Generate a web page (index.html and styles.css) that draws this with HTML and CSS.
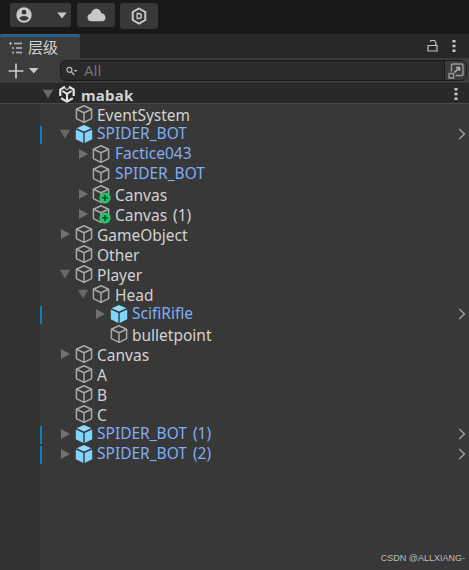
FILE: index.html
```
<!DOCTYPE html>
<html lang="zh-CN">

<head>
  <meta charset="UTF-8" />
  <meta name="viewport" content="width=device-width, initial-scale=1" />
  <title>层级</title>
  <link rel="stylesheet" href="styles.css">
</head>

<body>

  <!-- shared icons -->
  <svg class="sprite" width="0" height="0">
    <symbol id="cube" viewBox="0 0 18 20">
      <path d="M9 1.8 L16.6 5.2 V14.6 L9 18.4 L1.4 14.6 V5.2 Z M1.4 5.2 L9 8.8 L16.6 5.2 M9 8.8 V18.4" fill="none" stroke="#a8a8a8" stroke-width="1.5" stroke-linejoin="round" />
    </symbol>
    <symbol id="prefab" viewBox="0 0 18 20">
      <path d="M9 1 L16.4 4.3 L9 7.6 L1.6 4.3 Z" fill="#8bdcff" />
      <path d="M.8 5.6 L8.3 9 V19 L.8 15.2 Z M17.2 5.6 L9.7 9 V19 L17.2 15.2 Z" fill="#7fd6fd" />
    </symbol>
    <symbol id="down" viewBox="0 0 12 10">
      <path d="M.8 .8 H11.2 L6 9.5 Z" fill="#686868" />
    </symbol>
    <symbol id="right" viewBox="0 0 12 12">
      <path d="M2 1 L11 6 L2 11 Z" fill="#707070" />
    </symbol>
    <symbol id="plus" viewBox="0 0 12 12">
      <circle cx="6" cy="6" r="5.6" fill="#1cc765" />
      <path d="M6 3 V9 M3 6 H9" stroke="#17482c" stroke-width="1.7" />
    </symbol>
    <symbol id="dots" viewBox="0 0 4 14">
      <path d="M.5 1 H3.5 V3.5 H.5 Z M.5 5.7 H3.5 V8.3 H.5 Z M.5 10.5 H3.5 V13 H.5 Z" fill="#c8c8c8" />
    </symbol>
    <symbol id="open" viewBox="0 0 8 12">
      <path d="M1.3 1 L6.3 6 L1.3 11" fill="none" stroke="#989898" stroke-width="1.7" />
    </symbol>
  </svg>

  <div class="topbar">
    <div class="btn btn-account">
      <svg width="16" height="16" viewBox="0 0 16 16">
        <circle cx="8" cy="8" r="7.7" fill="#c8c8c8" />
        <circle cx="8" cy="5.2" r="2.4" fill="#383838" />
        <path d="M3.2 11.2 Q4.5 8.9 8 8.9 T12.8 11.2 Q11 13.7 8 13.7 T3.2 11.2 Z" fill="#383838" />
      </svg>
      <svg width="10" height="7" viewBox="0 0 10 7"><path d="M.3 .5 H9.7 L5 6.5 Z" fill="#c8c8c8" /></svg>
    </div>
    <div class="btn btn-cloud">
      <svg width="19" height="14" viewBox="0 0 19 14">
        <path d="M4.2 13.3 C-.6 13.3 -.8 6.3 4 5.6 C5.2 -.8 13.2 -1 14.3 5.3 C20 5.6 19.5 13.3 15 13.3 Z" fill="#c8c8c8" />
      </svg>
    </div>
    <div class="btn btn-hex">
      <svg width="16" height="18" viewBox="0 0 16 18">
        <path d="M8 1.5 L14.3 5 V13 L8 16.5 L1.7 13 V5 Z" fill="none" stroke="#c8c8c8" stroke-width="2" />
        <path d="M6.2 6.5 H8 Q10.3 6.5 10.3 9 T8 11.5 H6.2 Z" fill="none" stroke="#c8c8c8" stroke-width="1.4" />
      </svg>
    </div>
  </div>

  <div class="tabs">
    <div class="tab">
      <svg width="14" height="12" viewBox="0 0 14 12">
        <path d="M.3 1.5 H2.7 M5 1.5 H13 M3 6 H5 M7 6 H13 M3 10.5 H5 M7 10.5 H13" stroke="#bdbdbd" stroke-width="1.3" />
        <path d="M1.5 0 V3" stroke="#bdbdbd" />
      </svg>
      <span class="tab-name">层级</span>
    </div>
    <svg class="lock" width="11" height="13" viewBox="0 0 11 13">
      <path d="M1 6.5 H10 V12 H1 Z M8.8 6.5 V3.2 L7.5 1.5 H4 L3 2.6" fill="none" stroke="#c4c4c4" stroke-width="1.2" />
    </svg>
    <svg class="tab-menu" width="4" height="14"><use href="#dots" /></svg>
  </div>

  <div class="tools">
    <svg class="add" width="31" height="16" viewBox="0 0 31 16">
      <path d="M8 .5 V15.5 M.5 8 H15.5" stroke="#c8c8c8" stroke-width="1.7" />
      <path d="M21 5 H30.5 L25.7 10.5 Z" fill="#c8c8c8" />
    </svg>
    <div class="search">
      <svg width="12" height="10" viewBox="0 0 12 10">
        <circle cx="3.4" cy="3.8" r="2.5" fill="none" stroke="#b8b8b8" stroke-width="1.2" />
        <path d="M5.2 5.6 L8.3 8.9" stroke="#b8b8b8" stroke-width="1.4" />
        <path d="M7.7 4 H11.5 L9.6 6 Z" fill="#b8b8b8" />
      </svg>
      <span class="hint">All</span>
      <div class="picker">
        <svg width="16" height="16" viewBox="0 0 16 16">
          <path d="M3.5 8.5 V2 Q3.5 1 4.5 1 H14 Q15 1 15 2 V11.5 Q15 12.5 14 12.5 H7.5" fill="none" stroke="#999" stroke-width="1.4" />
          <path d="M1 10.5 H5.5 V15 H1 Z" fill="none" stroke="#999" stroke-width="1.4" />
          <path d="M6.5 9.5 L11.5 4.5 M8 4.5 H11.5 V8" fill="none" stroke="#b5b5b5" stroke-width="1.5" />
        </svg>
      </div>
    </div>
  </div>

  <div class="scene">
    <svg class="fold" width="12" height="10"><use href="#down" /></svg>
    <svg class="unity" width="16" height="18" viewBox="0 0 16 18">
      <path d="M6 1.6 L1.3 4.6 V11 M10 1.6 L14.7 4.6 V11 M2.2 13.3 L8 16.6 L13.8 13.3" fill="none" stroke="#e6e6e6" stroke-width="2.2" />
      <path d="M3.5 6 L8 8.8 L12.5 6 M8 8.8 V15.5" fill="none" stroke="#e6e6e6" stroke-width="2" />
      <path d="M5.3 3 L8 4.8 L10.7 3" fill="none" stroke="#bbb" stroke-width="1.1" />
    </svg>
    <span class="scene-name">mabak</span>
    <svg class="scene-menu" width="4" height="14"><use href="#dots" /></svg>
  </div>

  <div class="tree">
    <div class="row">
      <span class="arrow"></span>
      <svg class="icon"><use href="#cube" /></svg>
      <span class="name">EventSystem</span>
    </div>
    <div class="row linked">
      <span class="arrow"><svg width="12" height="10"><use href="#down" /></svg></span>
      <svg class="icon"><use href="#prefab" /></svg>
      <span class="name">SPIDER_BOT</span>
      <svg class="open"><use href="#open" /></svg>
    </div>
    <div class="row level-2 blue">
      <span class="arrow"><svg width="12" height="12"><use href="#right" /></svg></span>
      <svg class="icon"><use href="#cube" /></svg>
      <span class="name">Factice043</span>
    </div>
    <div class="row level-2 blue">
      <span class="arrow"></span>
      <svg class="icon"><use href="#cube" /></svg>
      <span class="name">SPIDER_BOT</span>
    </div>
    <div class="row level-2">
      <span class="arrow"><svg width="12" height="12"><use href="#right" /></svg></span>
      <span class="icon"><svg class="icon"><use href="#cube" /></svg><svg class="badge"><use href="#plus" /></svg></span>
      <span class="name">Canvas</span>
    </div>
    <div class="row level-2">
      <span class="arrow"><svg width="12" height="12"><use href="#right" /></svg></span>
      <span class="icon"><svg class="icon"><use href="#cube" /></svg><svg class="badge"><use href="#plus" /></svg></span>
      <span class="name">Canvas (1)</span>
    </div>
    <div class="row">
      <span class="arrow"><svg width="12" height="12"><use href="#right" /></svg></span>
      <svg class="icon"><use href="#cube" /></svg>
      <span class="name">GameObject</span>
    </div>
    <div class="row">
      <span class="arrow"></span>
      <svg class="icon"><use href="#cube" /></svg>
      <span class="name">Other</span>
    </div>
    <div class="row">
      <span class="arrow"><svg width="12" height="10"><use href="#down" /></svg></span>
      <svg class="icon"><use href="#cube" /></svg>
      <span class="name">Player</span>
    </div>
    <div class="row level-2">
      <span class="arrow"><svg width="12" height="10"><use href="#down" /></svg></span>
      <svg class="icon"><use href="#cube" /></svg>
      <span class="name">Head</span>
    </div>
    <div class="row level-3 linked">
      <span class="arrow"><svg width="12" height="12"><use href="#right" /></svg></span>
      <svg class="icon"><use href="#prefab" /></svg>
      <span class="name">ScifiRifle</span>
      <svg class="open"><use href="#open" /></svg>
    </div>
    <div class="row level-3">
      <span class="arrow"></span>
      <svg class="icon"><use href="#cube" /></svg>
      <span class="name">bulletpoint</span>
    </div>
    <div class="row">
      <span class="arrow"><svg width="12" height="12"><use href="#right" /></svg></span>
      <svg class="icon"><use href="#cube" /></svg>
      <span class="name">Canvas</span>
    </div>
    <div class="row">
      <span class="arrow"></span>
      <svg class="icon"><use href="#cube" /></svg>
      <span class="name">A</span>
    </div>
    <div class="row">
      <span class="arrow"></span>
      <svg class="icon"><use href="#cube" /></svg>
      <span class="name">B</span>
    </div>
    <div class="row">
      <span class="arrow"></span>
      <svg class="icon"><use href="#cube" /></svg>
      <span class="name">C</span>
    </div>
    <div class="row linked">
      <span class="arrow"><svg width="12" height="12"><use href="#right" /></svg></span>
      <svg class="icon"><use href="#prefab" /></svg>
      <span class="name">SPIDER_BOT (1)</span>
      <svg class="open"><use href="#open" /></svg>
    </div>
    <div class="row linked">
      <span class="arrow"><svg width="12" height="12"><use href="#right" /></svg></span>
      <svg class="icon"><use href="#prefab" /></svg>
      <span class="name">SPIDER_BOT (2)</span>
      <svg class="open"><use href="#open" /></svg>
    </div>
    <div class="credit">CSDN @ALLXIANG-</div>
  </div>

</body>
</html>
```
FILE: styles.css
```
* {
  box-sizing: border-box;
}

body {
  margin: 0;
  height: 570px;
  display: flex;
  flex-direction: column;
  overflow: hidden;
  background: #383838;
  color: #d2d2d2;
  font-family: "Noto Sans", "Noto Sans CJK SC", sans-serif;
  font-size: 15px;
}

svg {
  display: block;
  flex: none;
}

.sprite {
  position: absolute;
}

/* top toolbar */
.topbar {
  height: 34px;
  flex: none;
  display: flex;
  gap: 6px;
  padding: 3px 10px 0;
  background: #191919;
}

.btn {
  height: 24px;
  display: flex;
  align-items: center;
  justify-content: center;
  background: #383838;
  border-radius: 2px;
}

.btn-account {
  width: 61px;
  justify-content: space-between;
  padding: 0 4px 0 6px;
}

.btn-cloud {
  width: 38px;
}

.btn-hex {
  width: 38px;
  height: 26px;
  margin-left: -1px;
  border-radius: 3px;
}

/* tab strip */
.tabs {
  height: 24px;
  flex: none;
  display: flex;
  align-items: center;
  padding-right: 13px;
  background: #282828;
}

.tab {
  width: 80px;
  height: 24px;
  display: flex;
  align-items: center;
  gap: 5px;
  padding-left: 9px;
  background: #3c3c3c;
  border-top: 3px solid #2c5d87;
  border-radius: 2px 2px 0 0;
}

.tab-name {
  margin-bottom: 2px;
  line-height: 20px;
}

.lock {
  margin: 0 14px 2px auto;
}

.tab-menu {
  margin-bottom: 1px;
}

/* create + search */
.tools {
  height: 25px;
  flex: none;
  display: flex;
  align-items: center;
  padding: 0 2px 0 8px;
  background: #3c3c3c;
}

.add {
  margin-right: 21px;
}

.search {
  flex: 1;
  height: 21px;
  display: flex;
  align-items: center;
  padding-left: 5px;
  background: #2a2a2a;
  border: 1px solid #1c1c1c;
  border-radius: 6px;
  overflow: hidden;
}

.hint {
  margin-left: 6px;
  color: #727272;
  line-height: 19px;
}

.picker {
  width: 22px;
  height: 19px;
  margin-left: auto;
  display: flex;
  align-items: center;
  justify-content: center;
  background: #3c3c3c;
  border-left: 1px solid #1c1c1c;
}

/* scene header */
.scene {
  height: 21px;
  flex: none;
  display: flex;
  align-items: center;
  padding: 0 11px 0 42px;
  background: #292929;
  border-top: 1px solid #222;
  border-bottom: 1px solid #484848;
}

.unity {
  margin-left: 5px;
}

.scene-name {
  margin: 2px 0 0 6px;
  font-weight: bold;
  line-height: 18px;
  letter-spacing: 0.2px;
}

.scene-menu {
  margin-left: auto;
}

/* object tree */
.tree {
  flex: 1;
  margin-left: 40px;
  box-shadow: -40px 0 0 #323232;
  display: flex;
  flex-direction: column;
}

.row {
  height: 20px;
  flex: none;
  display: flex;
  align-items: center;
  padding: 0 3px 0 19px;
}

.level-2 {
  padding-left: 37px;
}

.level-3 {
  padding-left: 54px;
}

.arrow {
  width: 12px;
  flex: none;
}

.icon {
  width: 18px;
  height: 20px;
  flex: none;
}

span.icon {
  position: relative;
}

.row > .icon {
  margin-left: 4px;
}

.level-2 > .icon {
  margin-left: 3px;
}

.badge {
  position: absolute;
  left: 7px;
  top: 8px;
  width: 12px;
  height: 12px;
}

.name {
  margin: 1px 0 0 4px;
  font-size: 15.5px;
  line-height: 18px;
  word-spacing: 2px;
  white-space: nowrap;
}

.level-2 .name {
  margin-left: 5px;
}

.linked,
.blue {
  color: #7faef7;
}

.linked .name,
.blue .name {
  margin-top: -3px;
}

.linked {
  background: linear-gradient(#0f80be, #0f80be) 0 2px / 2px 18px no-repeat;
}

.open {
  width: 8px;
  height: 12px;
  margin-left: auto;
}

.credit {
  margin: auto 4px 5px auto;
  font: 9px/14px "Liberation Sans", sans-serif;
  color: #bdbdbd;
}
```
